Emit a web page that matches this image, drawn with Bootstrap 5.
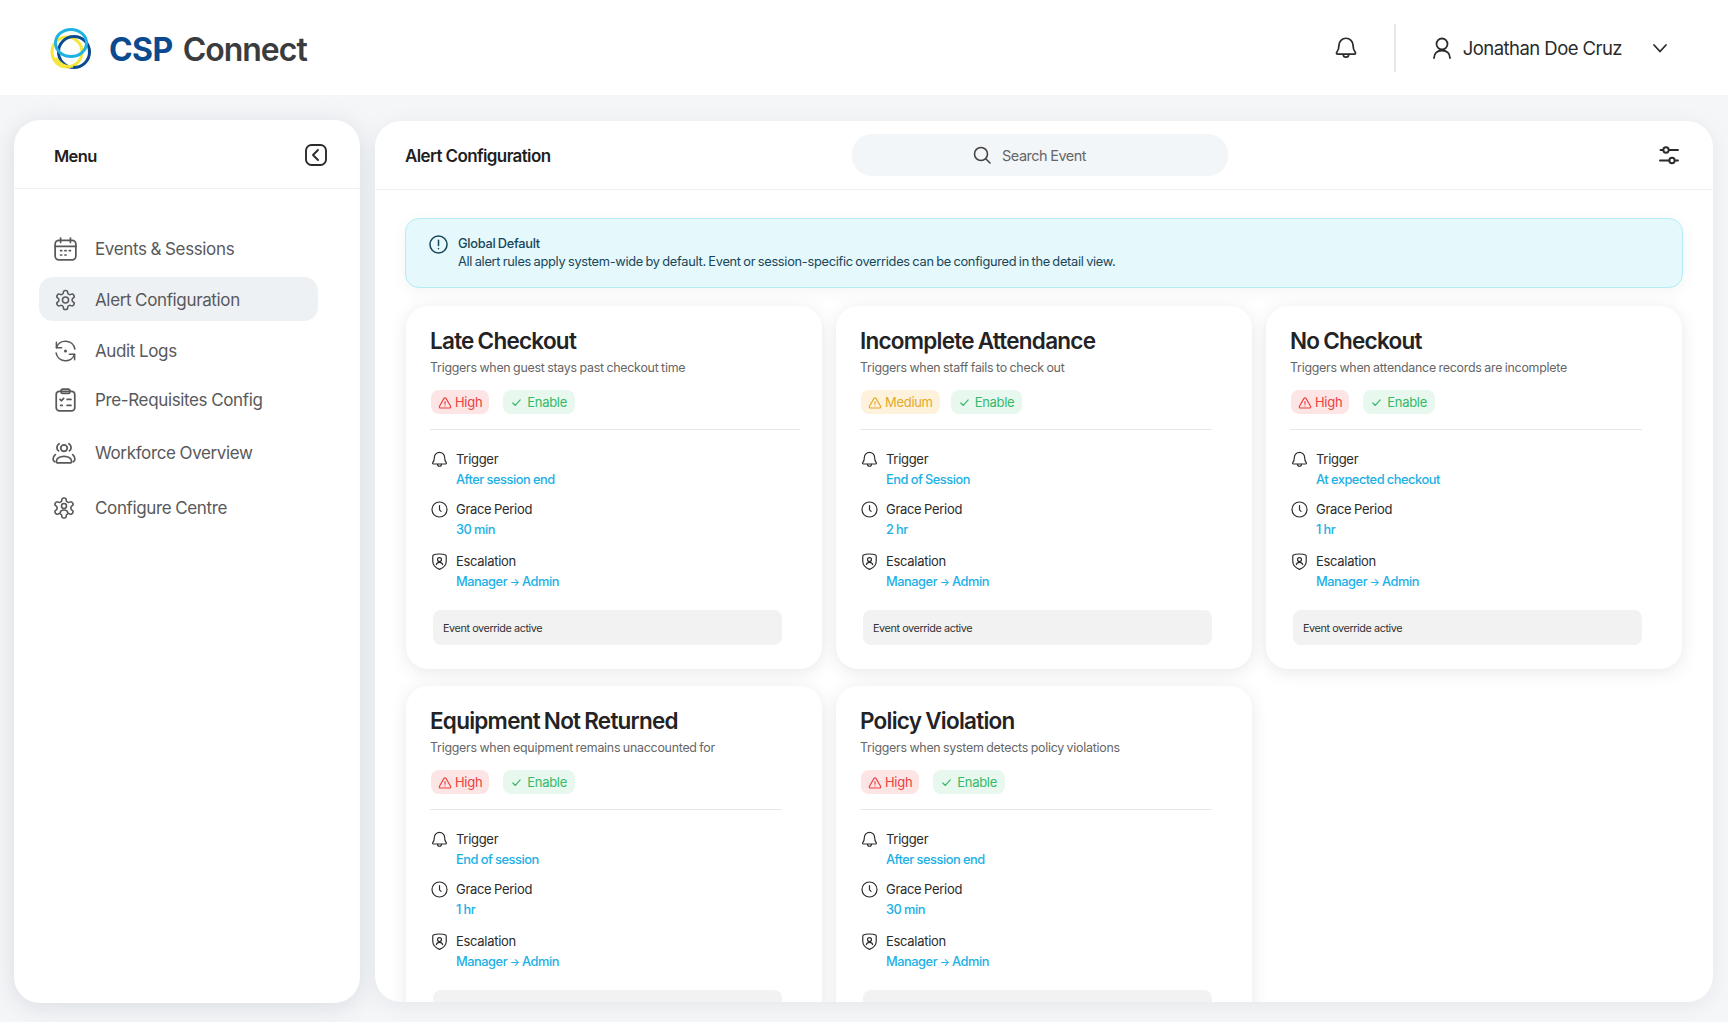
<!DOCTYPE html>
<html lang="en">
<head>
  <meta charset="UTF-8" />
  <title>CSP Connect - Alert Configuration</title>
  <link href="https://cdn.jsdelivr.net/npm/bootstrap@5.3.3/dist/css/bootstrap.min.css" rel="stylesheet" />
  <style>
    html, body { height: 100%; }
    body {
      font-family: Inter, "Liberation Sans", sans-serif;
      background: #f5f6f8;
      color: #222;
      overflow: hidden;
      letter-spacing: -0.2px;
    }
    .ico { fill: none; stroke: currentColor; stroke-width: 1.6; stroke-linecap: round; stroke-linejoin: round; flex-shrink: 0; }

    /* top bar */
    .top-bar { height: 95px; background: #fff; padding: 0 59px 0 49px; }
    .logo-mark { margin-top: -2px; }
    .logo-word { font-size: 32px; font-weight: 600; letter-spacing: -1px; color: #3b3c3e; margin-left: 16px; padding-top: 4px; }
    .logo-word span { color: #0b4a8f; font-weight: 700; margin-right: 3px; letter-spacing: -0.6px; }
    .top-divider { width: 2px; height: 48px; background: #e6e8ee; margin: 0 35px 0 35px; }
    .user-name { font-size: 18.5px; color: #2b2b2b; letter-spacing: -0.55px; margin: 0 29px 0 10px; padding-top: 2px; }

    /* page panels */
    .page-body { height: 927px; padding: 25px 15px 20px 14px; gap: 15px; }
    .side-panel { width: 346px; height: 883px; background: #fff; border-radius: 26px; box-shadow: 0 4px 24px rgba(120, 130, 145, .22); flex-shrink: 0; }
    .main-panel { height: 881px; background: #fff; border-radius: 26px; box-shadow: 0 4px 20px rgba(120, 130, 145, .12); overflow: hidden; margin-top: 1px; }
    .panel-head { height: 69px; border-bottom: 1px solid #f0f1f3; }
    .side-panel .panel-head { padding: 0 33px 0 40px; }
    .main-panel .panel-head { padding: 0 34px 0 30px; position: relative; }
    .head-title { font-size: 17px; font-weight: 600; color: #1f1f1f; letter-spacing: -0.62px; padding-top: 4px; }
    .side-panel .head-title { font-size: 16.5px; }
    .collapse-ico { margin-top: 2px; stroke-width: 1.9; }

    /* side menu */
    .side-menu { padding: 37px 0 0 25px; }
    .side-item { width: 279px; height: 44px; border-radius: 14px; padding-left: 15px; gap: 18px; font-size: 17px; color: #58595b; letter-spacing: -0.36px; word-spacing: -0.5px; text-decoration: none; }
    .side-item .ico { margin-top: 1px; }
    .side-item.is-active { background: #eef1f4; }
    .side-item.is-wider { padding-left: 13px; gap: 19px; }
    .side-label { padding-top: 3px; }
    .side-gap-7 { margin-top: 7px; }
    .side-gap-5 { margin-top: 5px; }
    .side-gap-9 { margin-top: 9px; }
    .side-gap-11 { margin-top: 11px; }

    /* search */
    .search-box { position: absolute; left: 477px; top: 13px; width: 376px; height: 42px; border-radius: 20px; background: #f3f6f8; font-size: 14.5px; color: #666; gap: 11px; padding-left: 121px; letter-spacing: -0.5px; word-spacing: -0.5px; }
    .search-box span { padding-top: 2px; }

    /* alert strip */
    .content-area { padding: 28px 30px 0 30px; }
    .info-strip { height: 70px; background: #e5f8fc; border: 1px solid #b4ebf5; border-radius: 14px; padding: 16px 0 0 23px; gap: 10px; box-shadow: 0 4px 14px rgba(120, 130, 145, .08); color: #17465a; font-size: 12.8px; line-height: 18px; letter-spacing: -0.28px; word-spacing: -0.8px; }
    .info-strip b { font-weight: 500; display: block; }

    /* alert cards */
    .alert-grid { display: grid; grid-template-columns: repeat(3, 416px); column-gap: 14px; row-gap: 17px; margin-top: 18px; padding-left: 1px; }
    .alert-card { height: 363px; background: #fff; border-radius: 22px; box-shadow: 0 3px 16px rgba(120, 130, 145, .18); padding: 18px 0 0 24px; }
    .alert-title { font-size: 22.5px; font-weight: 600; color: #232325; letter-spacing: -0.75px; word-spacing: -1px; line-height: 34px; margin: 0; }
    .alert-desc { font-size: 12.4px; color: #666; line-height: 20px; letter-spacing: -0.25px; word-spacing: -0.6px; margin: 0 0 12px; }
    .tag-row { gap: 14px; padding-left: 1px; }
    .tag-pill { height: 24px; border-radius: 8px; padding: 1px 7px 0; font-size: 13px; gap: 3px; letter-spacing: -0.3px; }
    .tag-pill .ico { stroke-width: 2; }
    .tag-high { background: #fee5e5; color: #e9413f; }
    .tag-medium { background: #fff2dc; color: #e0a92a; }
    .tag-medium + .tag-on { margin-left: -3px; }
    .tag-on { background: #e8f8ee; color: #37b868; gap: 5px; padding: 1px 8px 0; }
    .tag-on .ico { stroke-width: 2.6; }
    .card-rule { width: 352px; height: 1px; background: #e7e8ea; margin-top: 15px; margin-bottom: 20px; }
    .is-wide .card-rule { width: 370px; }
    .rule-row { gap: 7px; height: 40px; }
    .rule-row + .rule-row { margin-top: 10px; }
    .rule-row.is-last { margin-top: 12px; }
    .rule-row .ico { color: #2c2c2c; stroke-width: 1.5; }
    .rule-label { font-size: 13px; line-height: 18px; color: #2b2b2b; letter-spacing: -0.3px; word-spacing: -0.7px; }
    .rule-value { font-size: 12.8px; line-height: 24px; color: #1bb0e6; font-weight: 500; letter-spacing: -0.45px; word-spacing: -0.3px; }
    .flow-arrow { font-size: 10.5px; }
    .override-box { width: 349px; height: 35px; margin: 18px 0 0 3px; background: #f2f2f2; border-radius: 8px; padding: 3px 0 0 10px; font-size: 10.8px; color: #333; letter-spacing: -0.4px; }
  </style>
</head>
<body>
  <svg width="0" height="0" class="position-absolute">
    <symbol id="i-bell" viewBox="0 0 24 24"><path d="M12 3a6.5 6.5 0 0 0-6.5 6.5c0 3.2-.8 5-2 6.5-.6.8-.2 1.7.8 1.7h15.4c1 0 1.4-.9.8-1.7-1.2-1.5-2-3.3-2-6.5A6.5 6.5 0 0 0 12 3z"/><path d="M9.5 18a2.5 2.5 0 0 0 5 0"/></symbol>
    <symbol id="i-clock" viewBox="0 0 24 24"><circle cx="12" cy="12" r="9.5"/><path d="M12 7v5.5l2 1.800"/></symbol>
    <symbol id="i-shield" viewBox="0 0 24 24"><path d="M12 2.500c-3 0-6 .5-7.800 1.400C3.500 4.300 3.500 5 3.500 5.600v6c0 5 4 8.400 8.500 10.400 4.500-2 8.500-5.400 8.500-10.400v-6c0-.6 0-1.300-.7-1.700C18 3 15 2.500 12 2.500z"/><circle cx="12" cy="9.500" r="2.500"/><path d="M8 16c.4-2 2-3 4-3s3.600 1 4 3"/></symbol>
    <symbol id="i-warn" viewBox="0 0 24 24"><path d="M10.300 4 2.500 17.500A2 2 0 0 0 4.200 20.500h15.600a2 2 0 0 0 1.700-3L13.700 4a2 2 0 0 0-3.400 0z"/><path d="M12 9.500v4.500M12 17.200v.1"/></symbol>
    <symbol id="i-check" viewBox="0 0 24 24"><path d="M4 13l5.500 5.500L20 6.500"/></symbol>
    <symbol id="i-gear" viewBox="0 0 24 24"><path d="M12.220 2h-.44a2 2 0 0 0-2 2v.18a2 2 0 0 1-1 1.730l-.43.25a2 2 0 0 1-2 0l-.15-.08a2 2 0 0 0-2.730.73l-.22.38a2 2 0 0 0 .73 2.730l.15.1a2 2 0 0 1 1 1.720v.51a2 2 0 0 1-1 1.740l-.15.09a2 2 0 0 0-.73 2.730l.22.38a2 2 0 0 0 2.730.73l.15-.08a2 2 0 0 1 2 0l.43.25a2 2 0 0 1 1 1.730V20a2 2 0 0 0 2 2h.44a2 2 0 0 0 2-2v-.18a2 2 0 0 1 1-1.730l.43-.25a2 2 0 0 1 2 0l.15.08a2 2 0 0 0 2.730-.73l.22-.39a2 2 0 0 0-.73-2.730l-.15-.08a2 2 0 0 1-1-1.740v-.5a2 2 0 0 1 1-1.740l.15-.09a2 2 0 0 0 .73-2.730l-.22-.38a2 2 0 0 0-2.730-.73l-.15.08a2 2 0 0 1-2 0l-.43-.25a2 2 0 0 1-1-1.730V4a2 2 0 0 0-2-2z"/></symbol>
  </svg>

  <header class="top-bar d-flex align-items-center">
    <svg class="logo-mark" width="44" height="44" viewBox="0 0 44 44" fill="none" stroke-width="3">
      <ellipse cx="18" cy="27" rx="15" ry="15" stroke="#f5e63c"/>
      <circle cx="25" cy="27" r="15.500" stroke="#0b4a8f"/>
      <ellipse cx="22" cy="18" rx="15.500" ry="13.500" stroke="#1fb2e3"/>
      <path d="M7 33a15 15 0 0 0 17 8" stroke="#f5e63c"/>
    </svg>
    <div class="logo-word"><span>CSP</span> Connect</div>
    <div class="ms-auto d-flex align-items-center">
      <svg class="ico" width="26" height="26" style="color:#2b2b2b"><use href="#i-bell"/></svg>
      <div class="top-divider"></div>
      <svg class="ico" width="22" height="24" viewBox="0 0 22 24" style="color:#2b2b2b;stroke-width:1.8"><circle cx="11" cy="8" r="5.500"/><path d="M3 22c0-5 3.500-7.500 8-7.500s8 2.500 8 7.500"/></svg>
      <div class="user-name">Jonathan Doe Cruz</div>
      <svg class="ico" width="18" height="18" viewBox="0 0 18 18" style="color:#2b2b2b;stroke-width:1.8"><path d="M3 6l6 6.500L15 6"/></svg>
    </div>
  </header>

  <div class="page-body d-flex align-items-start">
    <aside class="side-panel">
      <div class="panel-head d-flex align-items-center justify-content-between">
        <div class="head-title">Menu</div>
        <svg class="ico collapse-ico" width="22" height="22" viewBox="0 0 22 22" style="color:#2b2b2b"><rect x="1" y="1" width="20" height="20" rx="5.500"/><path d="M13 6l-5 5 5 5"/></svg>
      </div>
      <nav class="side-menu">
        <a class="side-item d-flex align-items-center" href="#">
          <svg class="ico" width="23" height="24" viewBox="0 0 21 22"><rect x="1" y="3" width="19" height="18" rx="3.500"/><path d="M1 8.500h19M6 1v4M15 1v4M6 12.500h1M10 12.500h1M14 12.500h1M6 16.500h1M10 16.500h1"/></svg>
          <span class="side-label">Events &amp; Sessions</span>
        </a>
        <a class="side-item is-active d-flex align-items-center side-gap-7" href="#">
          <svg class="ico" width="23" height="24" viewBox="0 0 24 24"><use href="#i-gear"/><circle cx="12" cy="12" r="3.200"/></svg>
          <span class="side-label">Alert Configuration</span>
        </a>
        <a class="side-item d-flex align-items-center side-gap-7" href="#">
          <svg class="ico" width="23" height="24" viewBox="0 0 24 24"><path d="M2.500 3v5.500H8"/><path d="M21.500 21v-5.500H16"/><path d="M2.500 8.500A10 10 0 0 1 21.800 10"/><path d="M2.200 14a10 10 0 0 0 19.300 1.500"/><circle cx="12" cy="12" r=".8"/></svg>
          <span class="side-label">Audit Logs</span>
        </a>
        <a class="side-item d-flex align-items-center side-gap-5" href="#">
          <svg class="ico" width="23" height="24" viewBox="0 0 21 22"><rect x="2" y="3" width="17" height="18" rx="3"/><rect x="6.500" y="1" width="8" height="4" rx="1.500"/><path d="M5.500 10.500l1.300 1.200 2-2.200M12 10.500h3.500M6 16h1.500M12 16h3.500"/></svg>
          <span class="side-label">Pre-Requisites Config</span>
        </a>
        <a class="side-item is-wider d-flex align-items-center side-gap-9" href="#">
          <svg class="ico" width="24" height="22" viewBox="0 0 22 20"><circle cx="11" cy="5.500" r="3"/><path d="M6 8c-1-.5-1.500-2-1.500-3S5 2.500 6.500 1.500M16 8c1-.5 1.500-2 1.500-3s-.5-2.500-2-3.500"/><path d="M5 19h12c.6 0 1-.4 1-1 0-3-3-5-7-5s-7 2-7 5c0 .6.4 1 1 1z"/><path d="M3 11.500C1.800 12.500 1 14 1 15.500c0 1 .5 2 1.500 2.500M19 11.500c1.200 1 2 2.500 2 4 0 1-.5 2-1.500 2.500"/></svg>
          <span class="side-label">Workforce Overview</span>
        </a>
        <a class="side-item is-wider d-flex align-items-center side-gap-11" href="#">
          <svg class="ico" width="24" height="24" viewBox="0 0 24 24"><use href="#i-gear"/><circle cx="12" cy="10" r="2.500"/><path d="M8 17c.4-2 2-3 4-3s3.600 1 4 3"/></svg>
          <span class="side-label">Configure Centre</span>
        </a>
      </nav>
    </aside>

    <main class="main-panel flex-grow-1">
      <div class="panel-head d-flex align-items-center justify-content-between">
        <div class="head-title">Alert Configuration</div>
        <div class="search-box d-flex align-items-center">
          <svg class="ico" width="18" height="18" viewBox="0 0 18 18" style="color:#444"><circle cx="8" cy="8" r="6.500"/><path d="M13 13l4 4"/></svg>
          <span>Search Event</span>
        </div>
        <svg class="ico" width="20" height="20" viewBox="0 0 20 20" style="color:#2b2b2b;stroke-width:1.9"><circle cx="7" cy="5" r="2.700"/><circle cx="13" cy="15.500" r="2.700"/><path d="M1.500 5h2.800M9.700 5H19M1 15.500h9.300M15.700 15.500H19"/></svg>
      </div>
      <div class="content-area">
        <div class="info-strip d-flex align-items-start">
          <svg class="ico" width="19" height="19" viewBox="0 0 20 20"><circle cx="10" cy="10" r="9"/><path d="M10 5.500v5.500M10 14.300v.1"/></svg>
          <div>
            <b>Global Default</b>
            All alert rules apply system-wide by default. Event or session-specific overrides can be configured in the detail view.
          </div>
        </div>
        <div class="alert-grid" id="alertGrid"></div>
      </div>
    </main>
  </div>

  <script src="https://cdn.jsdelivr.net/npm/bootstrap@5.3.3/dist/js/bootstrap.bundle.min.js"></script>
  <script>
    const alertas = [
      { titulo: "Late Checkout", desc: "Triggers when guest stays past checkout time", nivel: "High", trigger: "After session end", grace: "30 min", wide: true },
      { titulo: "Incomplete Attendance", desc: "Triggers when staff fails to check out", nivel: "Medium", trigger: "End of Session", grace: "2 hr" },
      { titulo: "No Checkout", desc: "Triggers when attendance records are incomplete", nivel: "High", trigger: "At expected checkout", grace: "1 hr" },
      { titulo: "Equipment Not Returned", desc: "Triggers when equipment remains unaccounted for", nivel: "High", trigger: "End of session", grace: "1 hr" },
      { titulo: "Policy Violation", desc: "Triggers when system detects policy violations", nivel: "High", trigger: "After session end", grace: "30 min" }
    ];

    function linha(icone, label, valor, extra) {
      return `<div class="rule-row d-flex ${extra || ""}">
        <svg class="ico" width="19" height="19"><use href="#${icone}"/></svg>
        <div><div class="rule-label">${label}</div><div class="rule-value">${valor}</div></div>
      </div>`;
    }

    document.getElementById("alertGrid").innerHTML = alertas.map(a => `
      <div class="alert-card ${a.wide ? "is-wide" : ""}">
        <h2 class="alert-title">${a.titulo}</h2>
        <p class="alert-desc">${a.desc}</p>
        <div class="tag-row d-flex">
          <span class="tag-pill d-flex align-items-center ${a.nivel === "High" ? "tag-high" : "tag-medium"}">
            <svg class="ico" width="14" height="14"><use href="#i-warn"/></svg>${a.nivel}
          </span>
          <span class="tag-pill tag-on d-flex align-items-center">
            <svg class="ico" width="11" height="11"><use href="#i-check"/></svg>Enable
          </span>
        </div>
        <div class="card-rule"></div>
        ${linha("i-bell", "Trigger", a.trigger)}
        ${linha("i-clock", "Grace Period", a.grace)}
        ${linha("i-shield", "Escalation", 'Manager <span class="flow-arrow">→</span> Admin', "is-last")}
        <div class="override-box d-flex align-items-center">Event override active</div>
      </div>`).join("");
  </script>
</body>
</html>
